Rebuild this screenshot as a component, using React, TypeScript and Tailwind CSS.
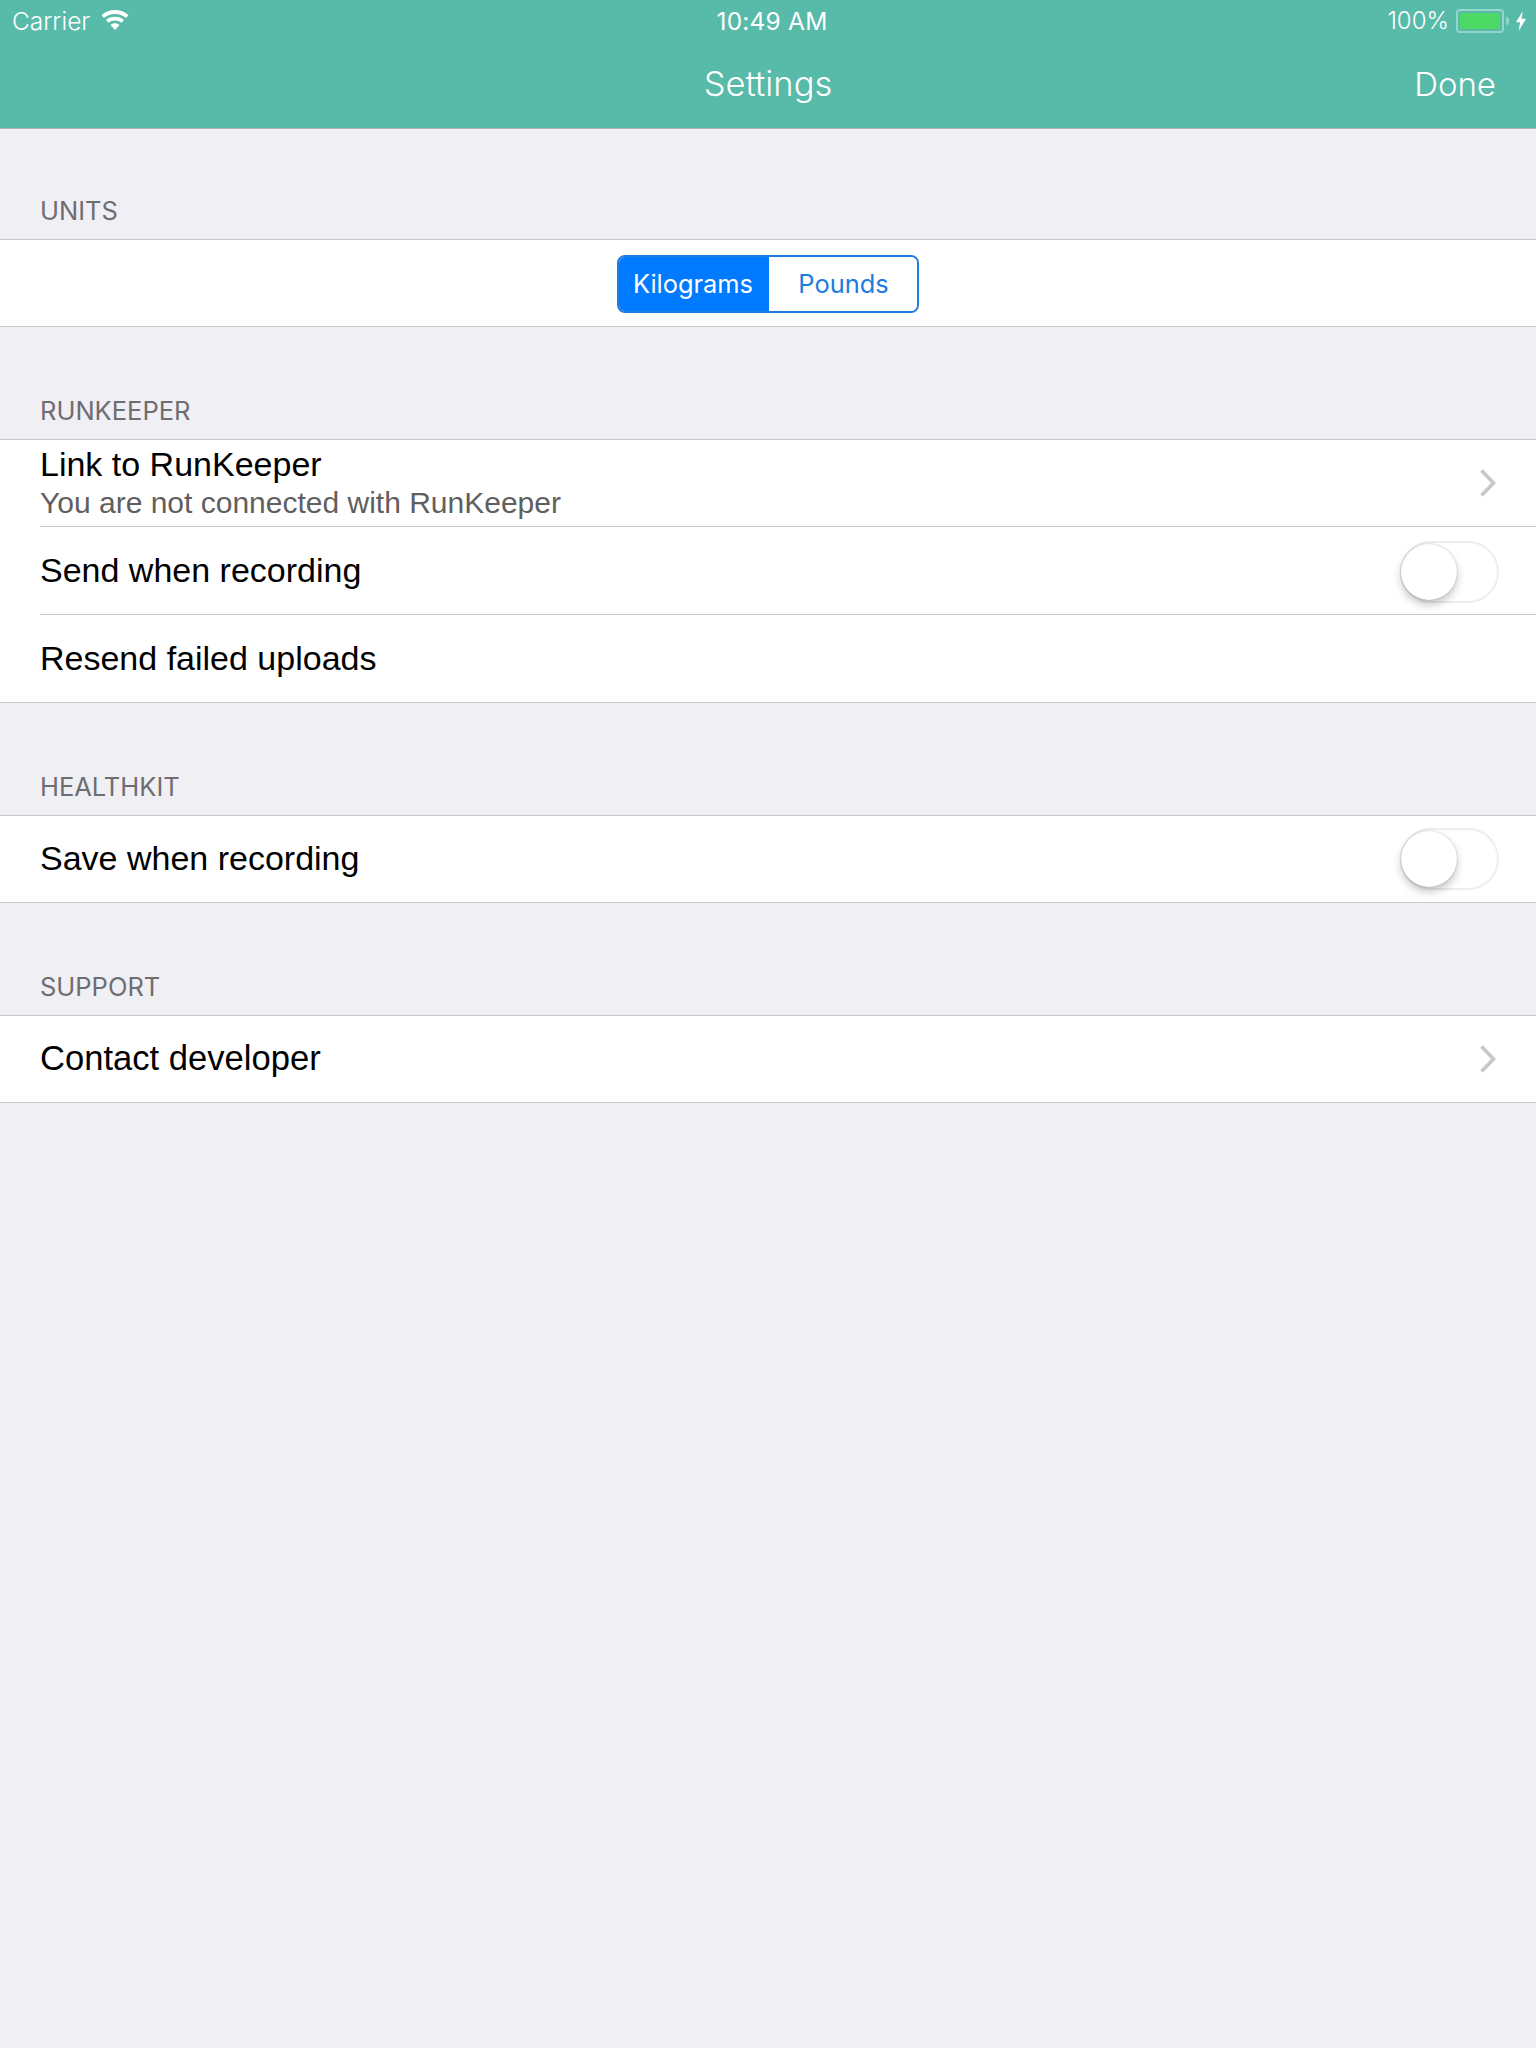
const sans = "font-['Liberation_Sans',Arial,sans-serif]";
const inter = "font-['Inter',sans-serif]";

const Chevron = () => (
  <svg width="18" height="28" viewBox="0 0 18 28" fill="none" className="mr-[2px] shrink-0">
    <path d="M2.5 1.5 L14.5 14 L2.5 26.5" stroke="#c7c7cc" strokeWidth="3.6" />
  </svg>
);

const Toggle = () => (
  <div className="relative mt-[2px] h-[62px] w-[99px] rounded-full border-2 border-[#eeeeee] bg-white">
    <div className="absolute left-[-1px] top-[1px] h-[56px] w-[56px] rounded-full bg-white shadow-[0_5px_9px_rgba(0,0,0,0.22),0_0_2px_rgba(0,0,0,0.25)]" />
  </div>
);

const SectionLabel = ({ title, first }: { title: string; first?: boolean }) => (
  <div
    className={`flex items-end pb-[13px] pl-[40px] text-[25.5px] leading-[30px] text-[#6d6d72] ${inter} ${
      first ? "h-[110px]" : "h-[112px]"
    }`}
  >
    {title}
  </div>
);

const Group = ({ children }: { children: React.ReactNode }) => (
  <div className="border-y border-[#c8c7cc] bg-white">{children}</div>
);

const Row = ({
  title,
  height,
  last,
  right,
  wide,
}: {
  title: string;
  height: string;
  last?: boolean;
  right?: React.ReactNode;
  wide?: boolean;
}) => (
  <div className="pl-[40px]">
    <div className={`flex items-center justify-between pr-[37px] ${height} ${last ? "" : "border-b border-[#c8c7cc]"}`}>
      <span className={`text-black ${wide ? "text-[34.6px]" : "text-[34px]"} ${sans}`}>{title}</span>
      {right}
    </div>
  </div>
);

export default function App() {
  return (
    <div className="min-h-[2048px] bg-[#efeff4]">
      <div className="h-[129px] border-b border-[#a9b5b2] bg-[#58baa9] text-white">
        <div className={`grid h-[42px] grid-cols-[1fr_auto_1fr] items-center pl-[12px] pr-[9px] text-[24.5px] font-light ${inter}`}>
          <div className="flex items-center gap-[11px]">
            <span>Carrier</span>
            <svg width="28" height="20" viewBox="0 0 28 20" fill="white" className="mb-[3px]">
              <path d="M14 20 L9.5 15 C12 12.8 16 12.8 18.5 15 Z" />
              <path d="M7.5 12.8 L5 10 C10 5.6 18 5.6 23 10 L20.5 12.8 C16.6 9.6 11.4 9.6 7.5 12.8 Z" />
              <path d="M3 8 L0.5 5.2 C8.2 -1.6 19.8 -1.6 27.5 5.2 L25 8 C18.6 2.6 9.4 2.6 3 8 Z" />
            </svg>
          </div>
          <span className="ml-[5px] font-normal tracking-[0.2px]">10:49 AM</span>
          <div className="flex items-center justify-end">
            <span className="mr-[7px] text-[24px]">100%</span>
            <div className="flex items-center">
              <div className="h-[24px] w-[48px] rounded-[4px] border-2 border-[#93d6ca] p-[2px]">
                <div className="h-full w-full rounded-[2px] bg-[#4cd964]" />
              </div>
              <div className="ml-[2px] h-[8px] w-[3px] rounded-r-full bg-[#93d6ca]" />
            </div>
            <svg width="12" height="20" viewBox="0 0 12 22" fill="white" className="ml-[6px]">
              <path d="M8 0 L0.5 12.5 H5 L3.5 22 L11.5 8.5 H6.5 Z" />
            </svg>
          </div>
        </div>
        <div className={`flex h-[86px] items-center justify-between pb-[3px] text-[34.5px] font-light ${inter}`}>
          <span className="w-[124px]" />
          <span>Settings</span>
          <span className="mt-[2px] w-[124px] pr-[40px] text-right text-[33px]">Done</span>
        </div>
      </div>

      <SectionLabel title="UNITS" first />
      <Group>
        <div className="flex h-[86px] items-center justify-center pt-[2px]">
          <div className={`flex h-[58px] w-[302px] overflow-hidden rounded-[8px] border-2 border-[#1c7ce0] text-[25.4px] ${inter}`}>
            <div className="flex w-[150px] items-center justify-center pr-[2px] bg-[#007aff] text-white">Kilograms</div>
            <div className="flex flex-1 items-center justify-center pl-[1px] bg-white text-[#1c7ce0]">Pounds</div>
          </div>
        </div>
      </Group>

      <SectionLabel title="RUNKEEPER" />
      <Group>
        <div className="pl-[40px]">
          <div className="flex h-[87px] items-center justify-between border-b border-[#c8c7cc] pr-[37px]">
            <div className={sans}>
              <div className="text-[34px] leading-[40px] text-black">Link to RunKeeper</div>
              <div className="text-[30px] leading-[38px] text-[#5f5f5f]">You are not connected with RunKeeper</div>
            </div>
            <Chevron />
          </div>
        </div>
        <Row title="Send when recording" height="h-[88px]" right={<Toggle />} />
        <Row title="Resend failed uploads" height="h-[87px]" last />
      </Group>

      <SectionLabel title="HEALTHKIT" />
      <Group>
        <Row title="Save when recording" height="h-[86px] pb-[2px]" last right={<Toggle />} />
      </Group>

      <SectionLabel title="SUPPORT" />
      <Group>
        <Row title="Contact developer" height="h-[86px] pb-[1px]" last wide right={<Chevron />} />
      </Group>
    </div>
  );
}
